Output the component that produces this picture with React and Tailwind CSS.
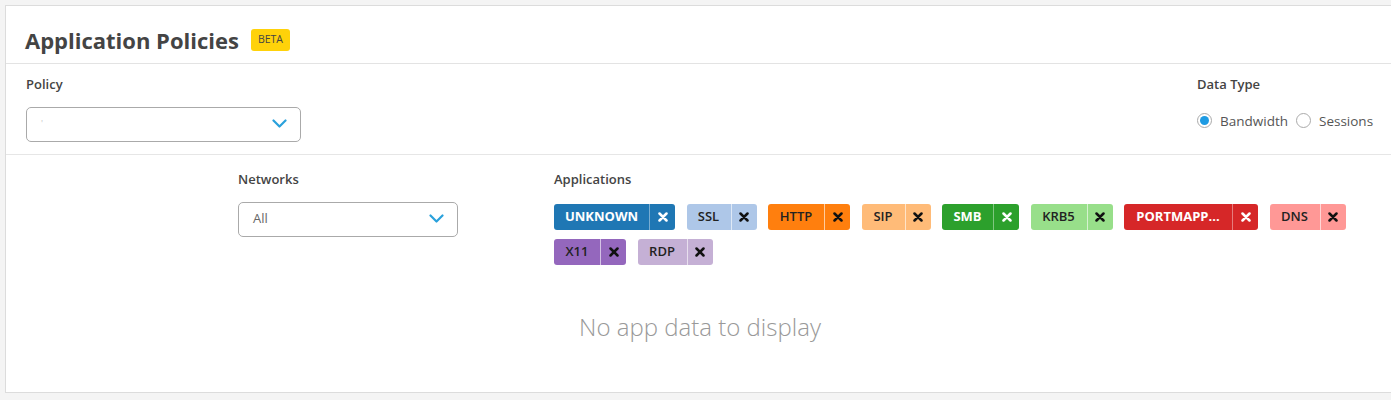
import React from 'react';

const font = { fontFamily: '"Open Sans", "Liberation Sans", sans-serif' };

const apps = [
  { name: 'UNKNOWN', bg: 'bg-[#1f77b4]', text: 'text-white', w: 'w-[95px]' },
  { name: 'SSL', bg: 'bg-[#aec7e8]', text: 'text-[#222]', w: 'w-[44px]' },
  { name: 'HTTP', bg: 'bg-[#ff7f0e]', text: 'text-[#222]', w: 'w-[56px]' },
  { name: 'SIP', bg: 'bg-[#ffbb78]', text: 'text-[#222]', w: 'w-[43px]' },
  { name: 'SMB', bg: 'bg-[#2ca02c]', text: 'text-white', w: 'w-[51px]' },
  { name: 'KRB5', bg: 'bg-[#98df8a]', text: 'text-[#222]', w: 'w-[56px]' },
  { name: 'PORTMAPP...', bg: 'bg-[#d62728]', text: 'text-white', w: 'w-[108px]' },
  { name: 'DNS', bg: 'bg-[#ff9896]', text: 'text-[#222]', w: 'w-[50px]' },
  { name: 'X11', bg: 'bg-[#9467bd]', text: 'text-[#222]', w: 'w-[46px]' },
  { name: 'RDP', bg: 'bg-[#c5b0d5]', text: 'text-[#222]', w: 'w-[49px]' },
];

function Chevron() {
  return (
    <svg width="15" height="10" viewBox="0 0 15 10" fill="none">
      <path d="M1.5 1.5 L7.5 7.5 L13.5 1.5" stroke="#2aa1dc" strokeWidth="2.2" strokeLinecap="round" strokeLinejoin="round" />
    </svg>
  );
}

function Select({ width, value, faint }) {
  return (
    <div className={`${width} h-[35px] border border-[#aaaaaa] rounded-[5px] flex items-center justify-between pl-[14px] pr-[13px] bg-white`}>
      <span className={faint ? 'text-[9px] text-[#c8c8c8]' : 'text-[13px] text-[#666]'}>{value}</span>
      <Chevron />
    </div>
  );
}

function Tag({ app }) {
  const white = app.text === 'text-white';
  return (
    <div className={`flex h-[26px] rounded-[3px] ${app.bg} ${app.text}`}>
      <div className={`${app.w} flex items-center justify-center text-[13px] ${white ? 'font-bold' : 'font-semibold'}`}>
        {app.name}
      </div>
      <div className={`w-[26px] flex items-center justify-center border-l ${white ? 'border-white/40' : 'border-white/60'}`}>
        <svg width="10" height="10" viewBox="0 0 10 10">
          <path d="M1.5 1.5 L8.5 8.5 M8.5 1.5 L1.5 8.5" stroke={white ? '#fff' : '#111'} strokeWidth="2.5" strokeLinecap="round" />
        </svg>
      </div>
    </div>
  );
}

function Radio({ checked, label }) {
  return (
    <label className="flex items-center gap-[8px]">
      <span className="w-[15px] h-[15px] rounded-full border border-[#aaa] bg-white flex items-center justify-center">
        {checked && <span className="w-[9px] h-[9px] rounded-full bg-[#1e9be3]" />}
      </span>
      <span className="text-[13.5px] text-[#555]">{label}</span>
    </label>
  );
}

export default function App() {
  return (
    <div className="w-[1391px] h-[400px] bg-[#f4f4f4] overflow-hidden pt-[5px] pl-[5px]" style={font}>
      <div className="w-[1400px] h-[388px] bg-white border border-[#dcdcdc] flex flex-col">
        <div className="h-[58px] border-b border-[#e3e3e3] flex items-center pl-[19px] pt-[10px] gap-[12px]">
          <h1 className="text-[22px] font-bold text-[#444] leading-none">Application Policies</h1>
          <span className="bg-[#ffd20a] text-[#444] text-[10.5px] px-[7px] h-[22px] flex items-center rounded-[3px]">BETA</span>
        </div>
        <div className="h-[91px] border-b border-[#e6e6e6] flex justify-between pl-[20px] pr-[23px] pt-[11px]">
          <div className="flex flex-col gap-[12px]">
            <span className="text-[13px] font-semibold text-[#444]">Policy</span>
            <Select width="w-[275px]" value="'" faint />
          </div>
          <div className="flex flex-col gap-[16px] w-[184px]">
            <span className="text-[13px] font-semibold text-[#444]">Data Type</span>
            <div className="flex items-center gap-[8px]">
              <Radio checked label="Bandwidth" />
              <Radio label="Sessions" />
            </div>
          </div>
        </div>
        <div className="flex pl-[232px] pt-[15px]">
          <div className="w-[316px] flex flex-col gap-[12px]">
            <span className="text-[13px] font-semibold text-[#444]">Networks</span>
            <Select width="w-[220px]" value="All" />
          </div>
          <div className="flex flex-col gap-[14px] w-[800px]">
            <span className="text-[13px] font-semibold text-[#444]">Applications</span>
            <div className="flex flex-wrap gap-x-[11.5px] gap-y-[9px]">
              {apps.map((a) => (
                <Tag key={a.name} app={a} />
              ))}
            </div>
            <div className="w-[292px] text-center text-[24px] font-light text-[#999] mt-[30px]">
              No app data to display
            </div>
          </div>
        </div>
      </div>
    </div>
  );
}
